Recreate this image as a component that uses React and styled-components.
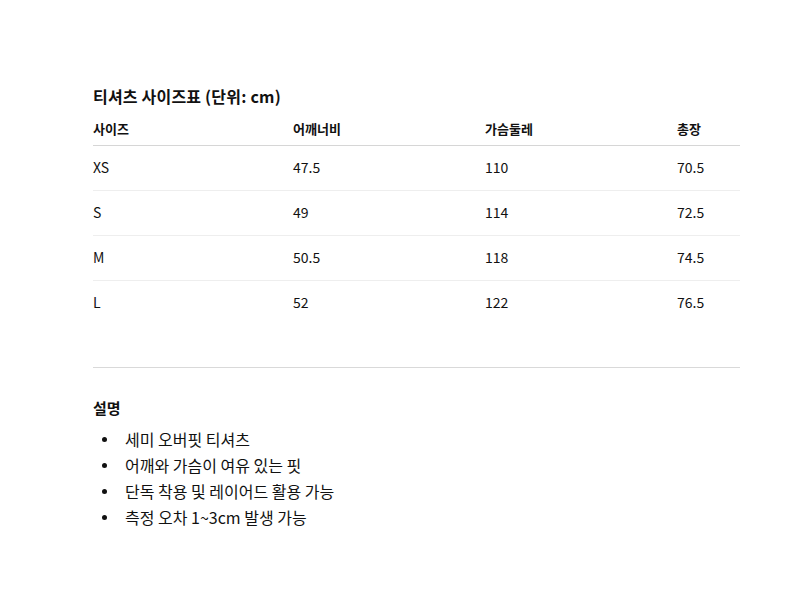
import React from "react";
import styled, { createGlobalStyle } from "styled-components";

const Global = createGlobalStyle`
  html, body { margin: 0; padding: 0; background: #fff; }
  body {
    font-family: "Segoe UI", "Noto Sans CJK KR", "Noto Sans", sans-serif;
    color: #111;
  }
`;

const Page = styled.div`
  padding: 84px 60px 40px 93px;
`;

const Title = styled.h2`
  margin: 0 0 3px;
  font-size: 16px;
  line-height: 24px;
  font-weight: 700;
  letter-spacing: 0.2px;
`;

const Table = styled.div`
  display: grid;
  grid-template-columns: 200px 192px 192px 1fr;
`;

const Cell = styled.div`
  display: flex;
  align-items: center;
  height: ${(p) => (p.$head ? "35px" : "45px")};
  padding-bottom: ${(p) => (p.$head ? "0" : "2px")};
  box-sizing: border-box;
  font-size: ${(p) => (p.$head ? "13px" : "14px")};
  font-weight: ${(p) => (p.$head ? 700 : 400)};
  border-bottom: ${(p) =>
    p.$last ? "1px solid transparent" : p.$head ? "1px solid #d6d6d6" : "1px solid #eeeeee"};
`;

const Divider = styled.hr`
  margin: 41px 0 0;
  border: 0;
  border-top: 1px solid #d9d9d9;
`;

const SubTitle = styled.h3`
  margin: 29px 0 7px;
  font-size: 15px;
  line-height: 22px;
  font-weight: 700;
`;

const List = styled.ul`
  margin: 0;
  padding: 0;
  list-style: none;
`;

const Item = styled.li`
  position: relative;
  padding-left: 32px;
  font-size: 16px;
  line-height: 26px;
  &::before {
    content: "";
    position: absolute;
    left: 9px;
    top: 11px;
    width: 5px;
    height: 5px;
    border-radius: 50%;
    background: #111;
  }
`;

const headers = ["사이즈", "어깨너비", "가슴둘레", "총장"];
const rows = [
  ["XS", "47.5", "110", "70.5"],
  ["S", "49", "114", "72.5"],
  ["M", "50.5", "118", "74.5"],
  ["L", "52", "122", "76.5"],
];
const notes = [
  "세미 오버핏 티셔츠",
  "어깨와 가슴이 여유 있는 핏",
  "단독 착용 및 레이어드 활용 가능",
  "측정 오차 1~3cm 발생 가능",
];

export default function App() {
  return (
    <>
      <Global />
      <Page>
        <Title>티셔츠 사이즈표 (단위: cm)</Title>
        <Table>
          {headers.map((h) => (
            <Cell key={h} $head>
              {h}
            </Cell>
          ))}
          {rows.map((r, i) =>
            r.map((c, j) => (
              <Cell key={i + "-" + j} $last={i === rows.length - 1}>
                {c}
              </Cell>
            ))
          )}
        </Table>
        <Divider />
        <SubTitle>설명</SubTitle>
        <List>
          {notes.map((n) => (
            <Item key={n}>{n}</Item>
          ))}
        </List>
      </Page>
    </>
  );
}
